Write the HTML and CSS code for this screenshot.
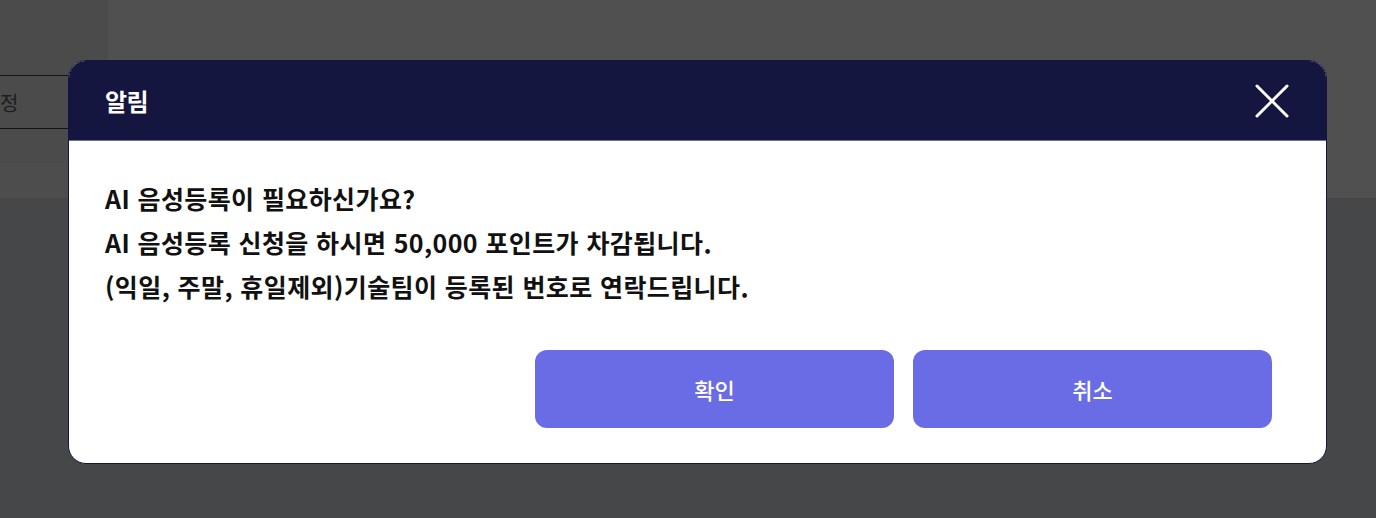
FILE: index.html
```html
<!DOCTYPE html>
<html lang="ko">
<head>
<meta charset="utf-8">
<title>알림</title>
<link rel="stylesheet" href="styles.css">
</head>
<body>
<div class="page">
  <div class="top">
    <div class="side">
      <div class="side-col">
        <div class="side-space"></div>
        <div class="side-item">정</div>
      </div>
      <div class="side-foot"></div>
    </div>
    <div class="top-main"></div>
  </div>
  <div class="bottom"></div>
</div>

<div class="modal" role="dialog" aria-labelledby="modal-title">
  <div class="modal-head">
    <h2 id="modal-title" class="modal-title">알림</h2>
    <button class="modal-close" aria-label="닫기">
      <svg width="34" height="34" viewBox="0 0 34 34" fill="none" stroke="#ffffff" stroke-width="3" stroke-linecap="round">
        <path d="M2 2 L32 32 M32 2 L2 32"/>
      </svg>
    </button>
  </div>
  <div class="modal-body">
    <p class="msg">AI 음성등록이 필요하신가요?<br>AI 음성등록 신청을 하시면 50,000 포인트가 차감됩니다.<br>(익일, 주말, 휴일제외)기술팀이 등록된 번호로 연락드립니다.</p>
    <div class="actions">
      <button class="btn">확인</button>
      <button class="btn">취소</button>
    </div>
  </div>
</div>
</body>
</html>
```

FILE: styles.css
```css
html, body {
  margin: 0;
  padding: 0;
}
body {
  width: 1376px;
  height: 518px;
  overflow: hidden;
  background: #464749;
  font-family: "Noto Sans CJK KR", "Noto Sans", sans-serif;
  position: relative;
}
.page {
  display: flex;
  flex-direction: column;
  height: 518px;
}
.top {
  display: flex;
  height: 198px;
  background: #505050;
}
.side {
  width: 108px;
  display: flex;
  flex-direction: column;
}
.side-col {
  height: 163px;
  background: #4b4b4b;
}
.side-space {
  height: 75px;
}
.side-item {
  height: 52px;
  border-top: 1px solid #141414;
  border-bottom: 1px solid #141414;
  display: flex;
  align-items: center;
  font-size: 20px;
  color: #1e1e1e;
  padding-left: 0;
}
.side-foot {
  height: 35px;
  background: #4d4d4d;
}
.top-main {
  flex: 1;
}
.bottom {
  flex: 1;
  background: #464749;
}

.modal {
  position: absolute;
  left: 68px;
  top: 60px;
  width: 1259px;
  height: 404px;
  box-sizing: border-box;
  border: 1px solid #14163f;
  border-radius: 18px;
  background: #ffffff;
  overflow: hidden;
  display: flex;
  flex-direction: column;
}
.modal-head {
  height: 80px;
  box-sizing: border-box;
  background: #14163f;
  border-bottom: 1px solid #6e6f8e;
  display: flex;
  align-items: center;
  justify-content: space-between;
  padding: 0 37px 0 36px;
}
.modal-title {
  margin: 0;
  color: #ffffff;
  font-size: 24px;
  font-weight: 700;
  line-height: 1;
  letter-spacing: -0.5px;
}
.modal-close {
  background: none;
  border: 0;
  padding: 0;
  width: 34px;
  height: 34px;
  display: flex;
  cursor: pointer;
}
.modal-body {
  flex: 1;
  padding: 35px 54px 35px 36px;
  display: flex;
  flex-direction: column;
}
.msg {
  margin: 0;
  font-size: 25px;
  font-weight: 700;
  line-height: 44px;
  color: #111111;
  letter-spacing: 0.4px;
}
.actions {
  margin-top: 42px;
  display: flex;
  justify-content: flex-end;
  gap: 19px;
}
.btn {
  width: 359px;
  height: 78px;
  border: 0;
  border-radius: 12px;
  background: #6a6ce6;
  color: #ffffff;
  font-family: "Noto Sans CJK KR", "Noto Sans", sans-serif;
  font-size: 22px;
  font-weight: 500;
  cursor: pointer;
}
```
